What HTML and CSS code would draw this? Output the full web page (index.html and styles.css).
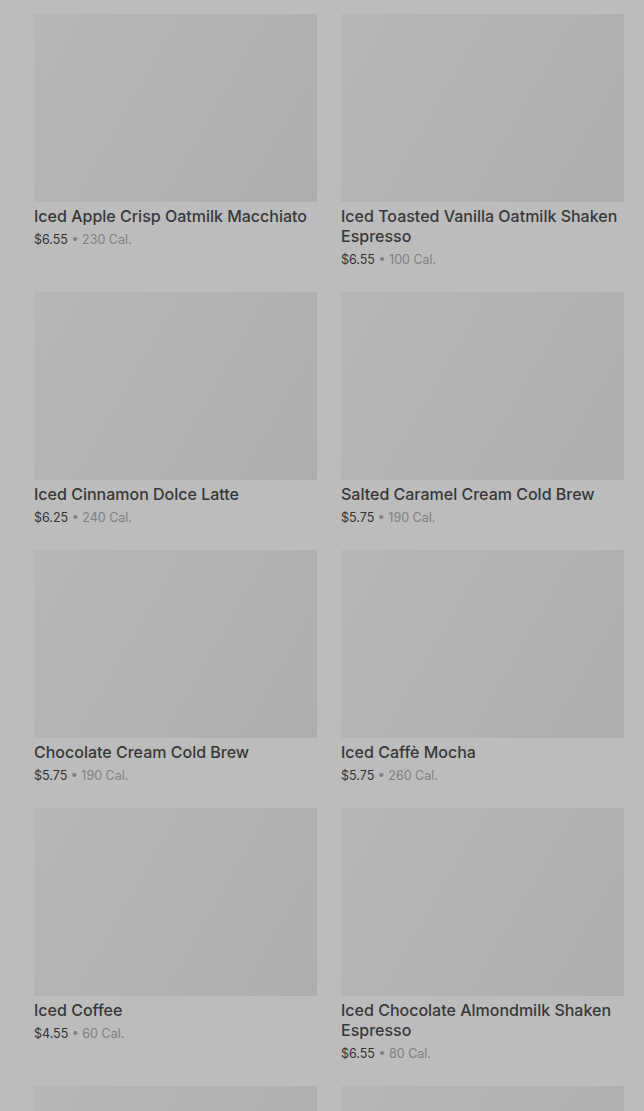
FILE: index.html
```html
<!DOCTYPE html>
<html lang="en">
<head>
    <meta charset="UTF-8">
    <meta name="viewport" content="width=device-width, initial-scale=1.0">
    <title>Cold Coffees</title>
    <link rel="stylesheet" href="styles.css">
</head>
<body>
    <div class="menu-grid">
        <div class="product">
            <div class="product-img"></div>
            <div class="product-name">Iced Apple Crisp Oatmilk Macchiato</div>
            <div class="product-info">$6.55 <span class="cal">• 230 Cal.</span></div>
        </div>
        <div class="product">
            <div class="product-img"></div>
            <div class="product-name">Iced Toasted Vanilla Oatmilk Shaken Espresso</div>
            <div class="product-info">$6.55 <span class="cal">• 100 Cal.</span></div>
        </div>
        <div class="product">
            <div class="product-img"></div>
            <div class="product-name">Iced Cinnamon Dolce Latte</div>
            <div class="product-info">$6.25 <span class="cal">• 240 Cal.</span></div>
        </div>
        <div class="product">
            <div class="product-img"></div>
            <div class="product-name">Salted Caramel Cream Cold Brew</div>
            <div class="product-info">$5.75 <span class="cal">• 190 Cal.</span></div>
        </div>
        <div class="product">
            <div class="product-img"></div>
            <div class="product-name">Chocolate Cream Cold Brew</div>
            <div class="product-info">$5.75 <span class="cal">• 190 Cal.</span></div>
        </div>
        <div class="product">
            <div class="product-img"></div>
            <div class="product-name">Iced Caffè Mocha</div>
            <div class="product-info">$5.75 <span class="cal">• 260 Cal.</span></div>
        </div>
        <div class="product">
            <div class="product-img"></div>
            <div class="product-name">Iced Coffee</div>
            <div class="product-info">$4.55 <span class="cal">• 60 Cal.</span></div>
        </div>
        <div class="product">
            <div class="product-img"></div>
            <div class="product-name">Iced Chocolate Almondmilk Shaken Espresso</div>
            <div class="product-info">$6.55 <span class="cal">• 80 Cal.</span></div>
        </div>
        <div class="product">
            <div class="product-img"></div>
        </div>
        <div class="product">
            <div class="product-img"></div>
        </div>
    </div>
</body>
</html>
```

FILE: styles.css
```css
body {
    margin: 0;
    background: #bcbcbc;
    font-family: Inter, "Noto Sans", sans-serif;
    overflow: hidden;
}
.menu-grid {
    display: grid;
    grid-template-columns: 283px 283px;
    column-gap: 24px;
    row-gap: 22px;
    padding: 14px 20px 0 34px;
}
.product-img {
    height: 188px;
    background: linear-gradient(120deg, #b6b6b6 0%, #b2b2b2 50%, #adadad 100%);
}
.product-name {
    margin-top: 4px;
    font-size: 16px;
    font-weight: 500;
    line-height: 20px;
    color: #383838;
}
.product-info {
    margin-top: 4px;
    font-size: 12.5px;
    line-height: 20px;
    color: #333;
}
.cal {
    color: #808080;
}
```
